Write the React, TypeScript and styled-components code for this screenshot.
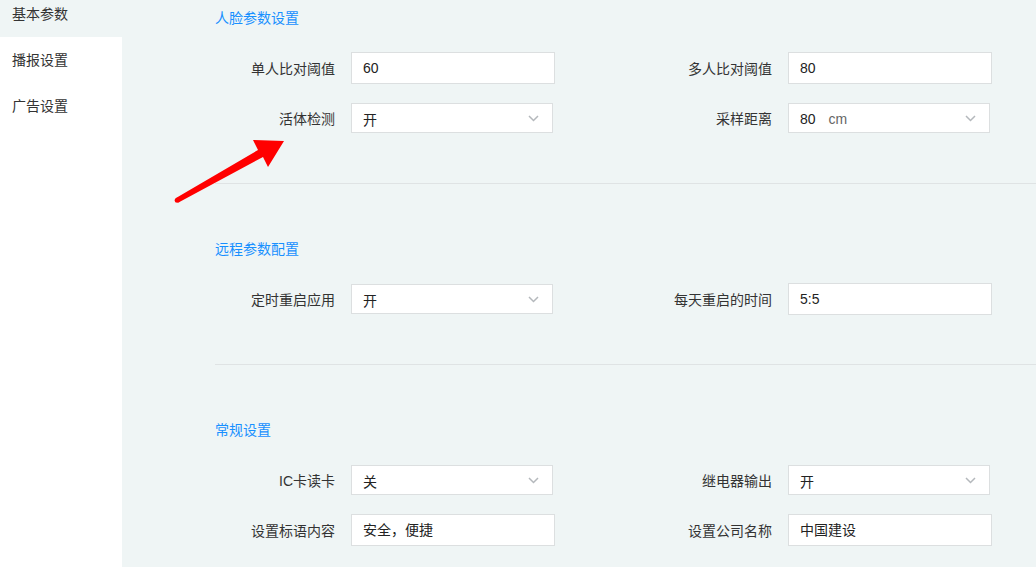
import React from 'react';
import styled, { createGlobalStyle } from 'styled-components';

const GlobalStyle = createGlobalStyle`
  html, body {
    margin: 0;
    padding: 0;
    background: #eff5f5;
    overflow: hidden;
  }
  * {
    box-sizing: border-box;
  }
`

const Page = styled.div`
  position: relative;
  display: flex;
  width: 1036px;
  height: 567px;
  overflow: hidden;
  font-family: "Liberation Sans", "Noto Sans CJK SC", sans-serif;
  font-size: 14px;
  color: #333;
  background: #eff5f5;
`

const SideMenu = styled.div`
  flex: 0 0 122px;
  background: #fff;
  margin-top: -9px;
`

const MenuItem = styled.div<{ active?: boolean }>`
  height: 46px;
  line-height: 46px;
  padding-left: 12px;
  font-size: 14px;
  color: #333;
  background: ${(p) => (p.active ? '#eff5f5' : '#fff')};
`

const Main = styled.div`
  flex: 1;
  padding: 8px 0 0 93px;
`

const Section = styled.div`
  padding-bottom: 49px;
  & + & {
    border-top: 1px solid #dfe3e4;
    padding-top: 55px;
  }
`

const Title = styled.div`
  height: 20px;
  line-height: 20px;
  font-size: 14px;
  color: #1890ff;
  margin-bottom: 24px;
`

const Grid = styled.div`
  display: grid;
  grid-template-columns: 437px 437px;
  row-gap: 18px;
`

const Item = styled.div`
  display: flex;
  align-items: center;
  height: 32px;
`

const Label = styled.div`
  width: 120px;
  text-align: right;
  margin-right: 16px;
  color: #333;
  white-space: nowrap;
`

const Input = styled.div`
  width: 204px;
  height: 32px;
  line-height: 30px;
  padding-left: 11px;
  background: #fff;
  border: 1px solid #dcdfe0;
  color: #222;
`

const Select = styled.div`
  display: flex;
  align-items: center;
  justify-content: space-between;
  width: 202px;
  height: 30px;
  padding: 1px 13px 0 11px;
  background: #fff;
  border: 1px solid #dcdfe0;
  color: #222;
`

const Unit = styled.span`
  margin-left: 13px;
  color: #666;
`

const Arrow = styled.svg`
  position: absolute;
  left: 170px;
  top: 135px;
`

const Chevron = () => (
  <svg width="11" height="7" viewBox="0 0 11 7">
    <path d="M1 1 L5.5 5.5 L10 1" fill="none" stroke="#b4b8bc" strokeWidth="1.5" />
  </svg>
);

type Field = { label: string; value: React.ReactNode; select?: boolean };

const Row = ({ label, value, select }: Field) => (
  <Item>
    <Label>{label}</Label>
    {select ? (
      <Select>
        <span>{value}</span>
        <Chevron />
      </Select>
    ) : (
      <Input>{value}</Input>
    )}
  </Item>
);

const sections: { title: string; fields: Field[] }[] = [
  {
    title: '人脸参数设置',
    fields: [
      { label: '单人比对阈值', value: '60' },
      { label: '多人比对阈值', value: '80' },
      { label: '活体检测', value: '开', select: true },
      { label: '采样距离', value: <>80<Unit>cm</Unit></>, select: true },
    ],
  },
  {
    title: '远程参数配置',
    fields: [
      { label: '定时重启应用', value: '开', select: true },
      { label: '每天重启的时间', value: '5:5' },
    ],
  },
  {
    title: '常规设置',
    fields: [
      { label: 'IC卡读卡', value: '关', select: true },
      { label: '继电器输出', value: '开', select: true },
      { label: '设置标语内容', value: '安全，便捷' },
      { label: '设置公司名称', value: '中国建设' },
    ],
  },
];

const App = () => {
  return (
    <Page>
      <GlobalStyle />
      <SideMenu>
        <MenuItem active>基本参数</MenuItem>
        <MenuItem>播报设置</MenuItem>
        <MenuItem>广告设置</MenuItem>
      </SideMenu>
      <Main>
        {sections.map((s) => (
          <Section key={s.title}>
            <Title>{s.title}</Title>
            <Grid>
              {s.fields.map((f) => (
                <Row key={f.label} {...f} />
              ))}
            </Grid>
          </Section>
        ))}
      </Main>
      <Arrow width="120" height="75" viewBox="170 135 120 75">
        <polygon
          points="176,198 258,150 253,140 284,141 268,167 263,157 178.5,202.5"
          fill="#ff0000"
        />
        <circle cx="177.2" cy="200.2" r="2.5" fill="#ff0000" />
      </Arrow>
    </Page>
  );
};

export default App;
